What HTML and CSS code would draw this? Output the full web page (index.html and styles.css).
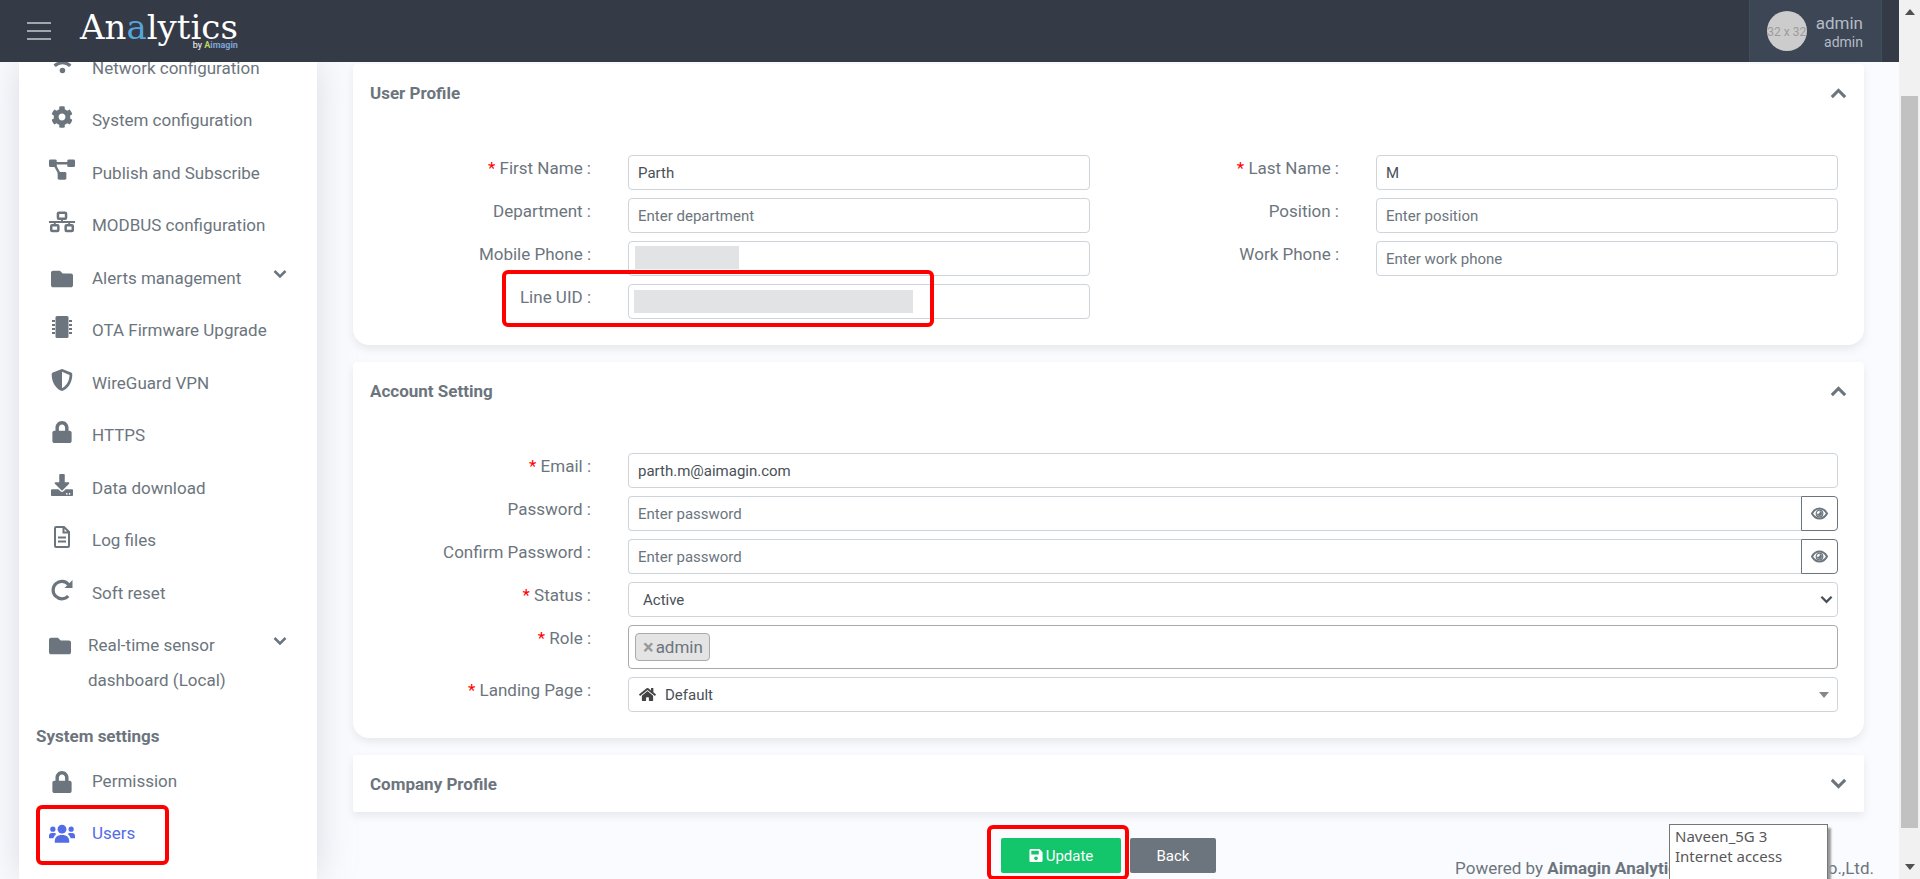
FILE: index.html
```html
<!DOCTYPE html>
<html lang="en">
<head>
<meta charset="utf-8">
<title>Analytics - User</title>
<link rel="stylesheet" href="styles.css">
</head>
<body>
<svg class="sprite" aria-hidden="true">
  <symbol id="folder" viewBox="0 0 512 512"><path d="M464 128H272l-64-64H48C21.500 64 0 85.500 0 112v288c0 26.500 21.500 48 48 48h416c26.500 0 48-21.500 48-48V176c0-26.500-21.500-48-48-48z"/></symbol>
  <symbol id="lock" viewBox="-32 0 512 512"><path d="M400 224h-24v-72C376 68.200 307.800 0 224 0S72 68.200 72 152v72H48c-26.500 0-48 21.500-48 48v192c0 26.500 21.500 48 48 48h352c26.500 0 48-21.500 48-48V272c0-26.500-21.500-48-48-48zm-104 0H152v-72c0-39.700 32.300-72 72-72s72 32.300 72 72v72z"/></symbol>
  <symbol id="eye" viewBox="0 0 17 13"><path d="M1 6.500C2.800 3.200 5.500 1.500 8.500 1.500s5.700 1.700 7.500 5c-1.800 3.300-4.500 5-7.500 5S2.800 9.800 1 6.500z" fill="none" stroke="currentColor" stroke-width="2"/><circle cx="8.500" cy="6.500" r="3.300" fill="none" stroke="currentColor" stroke-width="1.200"/><path d="M8.500 4a2.500 2.500 0 1 1-2.500 2.500A1.800 1.800 0 0 0 8.500 4z"/></symbol>
  <symbol id="chevron" viewBox="0 0 14 14"><path d="M1.500 4l5.500 5.500L12.500 4" fill="none" stroke="currentColor" stroke-width="2.500"/></symbol>
</svg>

<div class="window">
<div class="app">
  <header class="topbar">
    <button class="menu" aria-label="Toggle menu"><span></span><span></span><span></span></button>
    <a class="logo" href="#"><span class="logo-name">An<span class="logo-a">a</span>lytics</span><span class="logo-by">by <b class="lime">A</b><b>imagin</b></span></a>
    <a class="account" href="#">
      <span class="avatar">32 x 32</span>
      <span class="account-text"><span>admin</span><small>admin</small></span>
    </a>
  </header>

  <div class="body">
    <nav class="sidebar">
      <ul class="menu-list">
        <li><a href="#"><svg viewBox="0 0 24 24"><path d="M4 13a12 12 0 0 1 17 0" fill="none" stroke="currentColor" stroke-width="3.500"/><circle cx="12.500" cy="18" r="3"/></svg>Network configuration</a></li>
        <li><a href="#"><svg viewBox="0 0 512 512"><path d="M487.400 315.700l-42.600-24.600c4.300-23.200 4.300-47 0-70.200l42.600-24.600c4.900-2.800 7.100-8.600 5.500-14-11.100-35.600-30-67.800-54.700-94.600-3.800-4.100-10-5.100-14.800-2.300L380.800 110c-17.900-15.400-38.500-27.300-60.800-35.100V25.800c0-5.600-3.900-10.500-9.400-11.700-36.700-8.200-74.300-7.800-109.200 0-5.500 1.200-9.400 6.100-9.400 11.700V75c-22.200 7.900-42.800 19.800-60.800 35.100L88.700 85.500c-4.900-2.800-11-1.900-14.800 2.300-24.700 26.700-43.600 58.900-54.700 94.600-1.700 5.400.6 11.200 5.500 14L67.300 221c-4.300 23.200-4.300 47 0 70.200l-42.600 24.600c-4.900 2.800-7.100 8.600-5.500 14 11.100 35.600 30 67.800 54.700 94.600 3.800 4.100 10 5.100 14.800 2.300l42.600-24.600c17.900 15.400 38.500 27.300 60.800 35.100v49.200c0 5.600 3.900 10.500 9.400 11.700 36.700 8.200 74.300 7.800 109.200 0 5.500-1.200 9.400-6.100 9.400-11.700v-49.200c22.200-7.900 42.800-19.800 60.800-35.100l42.600 24.600c4.900 2.800 11 1.900 14.800-2.300 24.700-26.700 43.600-58.900 54.700-94.600 1.500-5.500-.7-11.300-5.600-14.100zM256 336c-44.100 0-80-35.900-80-80s35.900-80 80-80 80 35.900 80 80-35.900 80-80 80z"/></svg>System configuration</a></li>
        <li><a href="#"><svg class="wide" viewBox="0 0 27 22"><rect x="0" y="0" width="8" height="8" rx="1.500"/><rect x="19" y="0" width="8" height="8" rx="1.500"/><rect x="9" y="13" width="9" height="8" rx="1.500"/><path d="M6 4h15M6 6l5 9" stroke="currentColor" stroke-width="2.400"/></svg>Publish and Subscribe</a></li>
        <li><a href="#"><svg class="wide" viewBox="0 0 27 22"><g fill="none" stroke="currentColor" stroke-width="2.600"><rect x="9.300" y="1.300" width="8.400" height="6.400" rx="1"/><rect x="2.300" y="14.300" width="7.400" height="6" rx="1"/><rect x="17.300" y="14.300" width="7.400" height="6" rx="1"/></g><path d="M0 11h27M13.500 8v3M6 11v3M21 11v3" stroke="currentColor" stroke-width="2"/></svg>MODBUS configuration</a></li>
        <li><a href="#"><svg class="low"><use href="#folder"/></svg>Alerts management<svg class="caret"><use href="#chevron"/></svg></a></li>
        <li><a href="#"><svg viewBox="0 0 22 22"><rect x="4.500" y="0" width="13" height="22" rx="1.500"/><path d="M1 5h20M1 9h20M1 13h20M1 17h20" stroke="currentColor" stroke-width="1.800" stroke-dasharray="3 14"/></svg>OTA Firmware Upgrade</a></li>
        <li><a href="#"><svg viewBox="0 0 512 512"><path d="M466.500 83.700l-192-80a48.150 48.150 0 0 0-36.900 0l-192 80C27.700 91.100 16 108.600 16 128c0 198.500 114.500 335.700 221.500 380.300 11.800 4.900 25.100 4.900 36.900 0C360.100 472.600 496 349.300 496 128c0-19.400-11.700-36.900-29.500-44.300zM256.100 446.300l-.1-381 175.900 73.300c-3.300 151.400-82.100 261.100-175.800 307.700z"/></svg>WireGuard VPN</a></li>
        <li><a href="#"><svg><use href="#lock"/></svg>HTTPS</a></li>
        <li><a href="#"><svg viewBox="0 0 512 512"><path d="M216 0h80c13.300 0 24 10.700 24 24v168h87.700c17.800 0 26.700 21.500 14.100 34.100L269.700 378.300c-7.500 7.500-19.800 7.500-27.300 0L90.100 226.100c-12.600-12.600-3.700-34.100 14.100-34.100H192V24c0-13.300 10.700-24 24-24zm296 376v112c0 13.300-10.700 24-24 24H24c-13.300 0-24-10.700-24-24V376c0-13.300 10.700-24 24-24h146.700l49 49c20.100 20.100 52.500 20.100 72.600 0l49-49H488c13.300 0 24 10.700 24 24zm-124 88c0-11-9-20-20-20s-20 9-20 20 9 20 20 20 20-9 20-20zm64 0c0-11-9-20-20-20s-20 9-20 20 9 20 20 20 20-9 20-20z"/></svg>Data download</a></li>
        <li><a href="#"><svg viewBox="0 0 22 22"><g fill="none" stroke="currentColor" stroke-width="2"><path d="M5 1h8l5 5v14a1 1 0 0 1-1 1H5a1 1 0 0 1-1-1V2a1 1 0 0 1 1-1zM12.500 1v5.500H18M7 11.500h8M7 15.500h8"/></g></svg>Log files</a></li>
        <li><a href="#"><svg viewBox="0 0 22 22"><path d="M17.500 5.500A8.700 8.700 0 1 0 17.200 17" fill="none" stroke="currentColor" stroke-width="3.200"/><path d="M21.500 1v8h-8z"/></svg>Soft reset</a></li>
        <li><a class="tight" href="#"><svg class="low"><use href="#folder"/></svg>Real-time sensor dashboard (Local)<svg class="caret"><use href="#chevron"/></svg></a></li>
      </ul>
      <h2 class="menu-title">System settings</h2>
      <ul class="menu-list">
        <li><a href="#"><svg class="low"><use href="#lock"/></svg>Permission</a></li>
        <li><a class="active" href="#"><svg class="wide low" viewBox="0 0 27 22"><circle cx="13.500" cy="6" r="4.600"/><circle cx="4" cy="6" r="2.700"/><circle cx="23" cy="6" r="2.700"/><path d="M6 20v-2.500a6 6 0 0 1 6-5.500h3a6 6 0 0 1 6 5.500V20zM0 15.500V13a3 3 0 0 1 3-3h3l1.500 1A8 8 0 0 0 4.500 15.500zM27 15.500V13a3 3 0 0 0-3-3h-3l-1.500 1a8 8 0 0 1 3 4.500z"/></svg>Users<span class="mark mark-users"></span></a></li>
      </ul>
    </nav>

    <main class="content">
      <form>
      <section class="card first">
        <div class="card-head"><h2>User Profile</h2><button type="button" class="toggle up" aria-label="Collapse User Profile"><svg><use href="#chevron"/></svg></button></div>
        <div class="two-col">
          <div class="fields">
            <div class="row"><label for="fn"><i>*</i> First Name :</label><input id="fn" value="Parth"></div>
            <div class="row"><label for="dp">Department :</label><input id="dp" placeholder="Enter department"></div>
            <div class="row"><label for="mp">Mobile Phone :</label><div class="cell"><input id="mp"><span class="hidden-value short"></span></div></div>
            <div class="row"><label for="lu">Line UID :</label><div class="cell"><input id="lu"><span class="hidden-value long"></span><span class="mark mark-line"></span></div></div>
          </div>
          <div class="fields">
            <div class="row"><label for="ln"><i>*</i> Last Name :</label><input id="ln" value="M"></div>
            <div class="row"><label for="ps">Position :</label><input id="ps" placeholder="Enter position"></div>
            <div class="row"><label for="wp">Work Phone :</label><input id="wp" placeholder="Enter work phone"></div>
          </div>
        </div>
      </section>

      <section class="card">
        <div class="card-head"><h2>Account Setting</h2><button type="button" class="toggle up" aria-label="Collapse Account Setting"><svg><use href="#chevron"/></svg></button></div>
        <div class="fields single">
          <div class="row"><label for="em"><i>*</i> Email :</label><input id="em" type="email" value="parth.m@aimagin.com"></div>
          <div class="row"><label for="pw">Password :</label><div class="group"><input id="pw" type="password" placeholder="Enter password"><button type="button" aria-label="Show password"><svg><use href="#eye"/></svg></button></div></div>
          <div class="row"><label for="cp">Confirm Password :</label><div class="group"><input id="cp" type="password" placeholder="Enter password"><button type="button" aria-label="Show password"><svg><use href="#eye"/></svg></button></div></div>
          <div class="row"><label for="st"><i>*</i> Status :</label><div class="cell"><select id="st"><option>Active</option></select><svg class="select-arrow"><use href="#chevron"/></svg></div></div>
          <div class="row"><label for="rl"><i>*</i> Role :</label><div class="tags"><span class="tag"><button type="button" aria-label="Remove admin">×</button>admin</span><input id="rl"></div></div>
          <div class="row"><label for="lp"><i>*</i> Landing Page :</label><div class="cell"><select id="lp" class="with-icon"><option>Default</option></select><svg class="home" viewBox="0 0 576 512"><path d="M280.370 148.260L96 300.110V464a16 16 0 0 0 16 16l112.060-.29a16 16 0 0 0 15.920-16V368a16 16 0 0 1 16-16h64a16 16 0 0 1 16 16v95.640a16 16 0 0 0 16 16.050L464 480a16 16 0 0 0 16-16V300L295.670 148.260a12.190 12.190 0 0 0-15.300 0zM571.600 251.470L488 182.560V44.050a12 12 0 0 0-12-12h-56a12 12 0 0 0-12 12v72.610L318.470 43a48 48 0 0 0-61 0L4.340 251.470a12 12 0 0 0-1.600 16.900l25.500 31A12 12 0 0 0 45.150 301l235.220-193.740a12.190 12.190 0 0 1 15.300 0L530.900 301a12 12 0 0 0 16.900-1.600l25.500-31a12 12 0 0 0-1.700-16.930z"/></svg><span class="triangle"></span></div></div>
        </div>
      </section>

      <section class="card closed">
        <div class="card-head"><h2>Company Profile</h2><button type="button" class="toggle" aria-label="Expand Company Profile"><svg><use href="#chevron"/></svg></button></div>
      </section>

      <div class="actions">
        <button class="btn update"><svg viewBox="0 0 448 512"><path d="M433.900 129.900l-83.900-83.900A48 48 0 0 0 316.100 32H48C21.500 32 0 53.500 0 80v352c0 26.500 21.500 48 48 48h352c26.500 0 48-21.500 48-48V163.900a48 48 0 0 0-14.100-34zM224 416c-35.300 0-64-28.700-64-64s28.700-64 64-64 64 28.700 64 64-28.700 64-64 64zm96-304.500V212c0 6.600-5.400 12-12 12H76c-6.600 0-12-5.400-12-12V108c0-6.600 5.400-12 12-12h228.500c3.200 0 6.200 1.300 8.500 3.500l3.500 3.500a12 12 0 0 1 3.500 8.500z"/></svg>Update<span class="mark mark-update"></span></button>
        <button type="button" class="btn back">Back</button>
      </div>
      </form>
      <footer class="footer"><p>Powered by <b>Aimagin Analytics</b> © 2023 Aimagin Co.,Ltd.</p><div class="tooltip" role="tooltip">Naveen_5G 3<br>Internet access</div></footer>
    </main>
  </div>
</div>
<div class="scrollbar" aria-hidden="true"><svg viewBox="0 0 10 6"><path d="M0 6l5-6 5 6z"/></svg><div class="thumb"></div><svg viewBox="0 0 10 6"><path d="M0 0l5 6 5-6z"/></svg></div>
</div>
</body>
</html>
```
FILE: styles.css
```css
* { box-sizing: border-box; }
body {
  margin: 0;
  background: #fafbfe;
  color: #6c757d;
  font: 17px/28px Roboto, "Noto Sans", sans-serif;
}
a { color: inherit; text-decoration: none; }
button, input, select { font-family: inherit; }
svg { fill: currentColor; }
.sprite { display: none; }

.window { display: flex; height: 100vh; overflow: hidden; }
.app { display: flex; flex: 1; flex-direction: column; min-width: 0; }
.body { display: flex; flex: 1; min-height: 0; padding-left: 19px; }

/* Top bar */
.topbar {
  position: relative;
  z-index: 2;
  display: flex;
  flex: none;
  align-items: center;
  height: 62px;
  padding: 0 17px 0 27px;
  background: #343a46;
}
.menu {
  display: flex;
  flex-direction: column;
  gap: 6px;
  width: 24px;
  padding: 0;
  border: 0;
  background: none;
}
.menu span { height: 2px; background: #a2a6ad; }
.logo { display: flex; flex-direction: column; margin-left: 29px; color: #fff; }
.logo-name { font: 34px/28px "DejaVu Serif", serif; }
.logo-a { color: #55a5dc; }
.logo-by { font-size: 9px; line-height: 8px; text-align: right; }
.logo-by b { color: #7ea4d6; }
.logo-by .lime { color: #bdd65a; }
.account {
  display: flex;
  align-items: center;
  gap: 9px;
  height: 62px;
  margin-left: auto;
  padding: 0 18px 0 17px;
  border: 1px solid #414d5d;
  border-width: 0 1px;
  background: #3c4655;
  color: #b5bbc4;
}
.avatar {
  width: 40px;
  height: 40px;
  border-radius: 50%;
  background: #ccc;
  color: #9c9c9c;
  font-size: 12px;
  line-height: 42px;
  text-align: center;
  white-space: nowrap;
  overflow: hidden;
}
.account-text { display: flex; flex-direction: column; padding-top: 2px; text-align: right; line-height: 20px; }
.account-text small { font-size: 14px; line-height: 18px; }

/* Sidebar */
.sidebar {
  flex: none;
  width: 298px;
  padding: 0 17px;
  background: #fff;
  box-shadow: 0 0 35px rgba(154, 161, 171, .35);
}
.menu-list { margin: 0; padding: 0; list-style: none; }
.menu-list:first-child { margin-top: -20px; }
.menu-list a {
  position: relative;
  display: flex;
  align-items: flex-start;
  gap: 17px;
  padding: 12px 0 12px 13px;
}
.menu-list li:nth-child(even) { padding-bottom: 1px; }
.menu-list svg { flex: none; width: 22px; height: 22px; margin: 0 2px; }
.menu-list .wide { width: 26px; margin: 0; }
.menu-list .low { margin-top: 4px; }
.menu-list .tight { gap: 15px; padding: 9px 64px 12px 11px; line-height: 35px; }
.menu-list .tight .low { margin-top: 7px; }
.menu-list .caret { position: absolute; top: 15px; right: 11px; width: 14px; height: 14px; }
.menu-list .active { color: #536de6; }
.menu-title { margin: 11px 0 5px; font-size: 17px; line-height: 28px; font-weight: 700; }

/* Outlines drawn over the page */
.mark { position: absolute; border: 4px solid #f00; border-radius: 6px; pointer-events: none; }
.mark-users { left: 0; top: -2px; width: 133px; height: 60px; }
.mark-line { left: -126px; top: -14px; width: 432px; height: 57px; }
.mark-update { left: -14px; top: -13px; width: 142px; height: 55px; }

/* Cards */
.content { flex: 1; min-width: 0; padding: 2px 35px 0 36px; }
.card {
  margin-bottom: 17px;
  padding: 0 17px;
  border-radius: 4px 4px 16px 16px;
  background: #fff;
  box-shadow: 0 4px 8px rgba(154, 161, 171, .2);
}
.card.closed { margin-bottom: 26px; border-radius: 2px; }
.card-head { display: flex; align-items: center; justify-content: space-between; height: 58px; }
.card.closed .card-head { height: 57px; }
.card-head h2 { margin: 0; font-size: 17px; line-height: 28px; font-weight: 700; }
.toggle { padding: 0; border: 0; background: none; color: #6c757d; }
.toggle svg { display: block; width: 17px; height: 17px; }
.toggle.up svg { transform: rotate(180deg); }
.two-col { display: grid; grid-template-columns: 1fr 1fr; gap: 28px; }
.two-col, .single { padding: 33px 9px 26px 0; }
.fields { display: flex; flex-direction: column; gap: 8px; }
.row { display: grid; grid-template-columns: 221px 1fr; gap: 37px; align-items: start; }
.two-col .fields { min-width: 0; }
.row label { line-height: 26px; text-align: right; }
.row i { color: #f00; font-style: normal; }
.cell, .group { position: relative; display: flex; min-width: 0; }
.row input, .row select {
  width: 100%;
  min-width: 0;
  height: 35px;
  padding: 0 9px;
  border: 1px solid #ced4da;
  border-radius: 4px;
  background: #fff;
  color: #495057;
  font-size: 15px;
}
.row select { appearance: none; padding: 0 14px; }
.row .with-icon { padding-left: 36px; }
.row input::placeholder { color: #6c757d; }
.hidden-value { position: absolute; height: 23px; background: #e2e3e5; }
.short { left: 7px; top: 5px; width: 104px; }
.long { left: 6px; top: 6px; width: 279px; }
.row .group input { border-radius: 4px 0 0 4px; border-right: 0; }
.group button {
  flex: none;
  width: 37px;
  height: 35px;
  padding: 0;
  border: 1px solid #6c757d;
  border-radius: 0 4px 4px 0;
  background: #fff;
  color: #6c757d;
}
.group button svg { display: block; width: 17px; height: 13px; margin: auto; }
.select-arrow { position: absolute; right: 5px; top: 11px; width: 13px; height: 13px; color: #495057; }
.home { position: absolute; left: 11px; top: 10px; width: 17px; height: 15px; color: #444; }
.triangle { position: absolute; right: 9px; top: 15px; border: 5px solid transparent; border-top: 6px solid #888; border-bottom: 0; }
.tags { display: flex; align-items: center; height: 44px; padding: 0 6px; border: 1px solid #aaa; border-radius: 4px; }
.row .tags input { border: 0; }
.tag {
  display: flex;
  flex: none;
  align-items: center;
  height: 28px;
  padding: 0 6px 0 7px;
  border: 1px solid #aaa;
  border-radius: 4px;
  background: #e4e4e4;
}
.tag button { padding: 0 2px 0 0; border: 0; background: none; color: #999; font-size: 20px; font-weight: 700; }

/* Actions and footer */
.actions { display: flex; justify-content: center; gap: 9px; }
.btn { position: relative; height: 35px; border: 0; border-radius: 2px; color: #fff; font-size: 15px; }
.btn svg { width: 14px; height: 15px; margin-right: 3px; vertical-align: -2px; }
.update { width: 120px; background: #13c56b; }
.back { width: 86px; background: #6c757d; }
.footer { position: relative; margin-right: -10px; text-align: right; }
.footer p { margin: -19px 0 0; }
.tooltip {
  position: absolute;
  right: 46px;
  top: -30px;
  width: 159px;
  height: 70px;
  padding: 1px 5px;
  border: 1px solid #767676;
  background: #fff;
  box-shadow: 3px 4px 2px #999;
  color: #575757;
  font: 15px/20px "Noto Sans", sans-serif;
  text-align: left;
}

/* Scroll bar */
.scrollbar { display: flex; flex: none; flex-direction: column; align-items: center; width: 21px; padding: 9px 2px; background: #f1f1f1; color: #505050; }
.scrollbar svg { width: 10px; height: 6px; }
.thumb { width: 17px; height: 85%; margin: 81px 0 auto; background: #c1c1c1; }
```
